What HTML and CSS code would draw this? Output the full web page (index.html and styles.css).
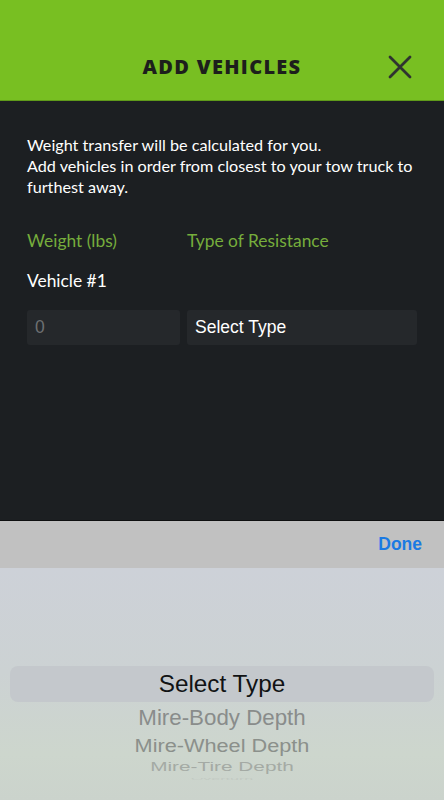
FILE: index.html
```html
<!DOCTYPE html>
<html lang="en">
<head>
<meta charset="utf-8">
<title>Add Vehicles</title>
<link rel="stylesheet" href="styles.css">
</head>
<body>
<div class="screen">
  <header class="header">
    <span class="spacer"></span>
    <h1 class="title">ADD VEHICLES</h1>
    <button class="close" aria-label="Close">
      <svg width="24" height="24" viewBox="0 0 24 24"><path d="M2 2 L22 22 M22 2 L2 22" stroke="#2f3330" stroke-width="2.8" stroke-linecap="round"/></svg>
    </button>
  </header>
  <main class="content">
    <p class="intro">Weight transfer will be calculated for you.<br>Add vehicles in order from closest to your tow truck to furthest away.</p>
    <div class="labels">
      <span class="label weight-col">Weight (lbs)</span>
      <span class="label">Type of Resistance</span>
    </div>
    <div class="vehicle">Vehicle #1</div>
    <div class="fields">
      <div class="field weight-field">0</div>
      <div class="field type-field">Select Type</div>
    </div>
  </main>
  <section class="picker">
    <div class="toolbar"><span class="done">Done</span></div>
    <div class="wheel">
      <div class="row selected">Select Type</div>
      <div class="row r1">Mire-Body Depth</div>
      <div class="row r2">Mire-Wheel Depth</div>
      <div class="row r3">Mire-Tire Depth</div>
      <div class="row r4">Overturn</div>
    </div>
  </section>
</div>
</body>
</html>
```

FILE: styles.css
```css
html, body {
  margin: 0;
  padding: 0;
}
body {
  width: 444px;
  height: 800px;
  overflow: hidden;
  font-family: "Lato", "Noto Sans", sans-serif;
  background: #1c1f22;
}
.screen {
  display: flex;
  flex-direction: column;
  height: 800px;
}
.header {
  height: 101px;
  flex: none;
  background: #78bf22;
  border-bottom: 1px solid #5f9a1a;
  display: grid;
  grid-template-columns: 60px 1fr 60px;
  align-items: end;
  padding-bottom: 19px;
  box-sizing: border-box;
}
.title {
  margin: 0;
  text-align: center;
  font-family: "Open Sans", "Liberation Sans", sans-serif;
  font-weight: 800;
  font-size: 20px;
  line-height: 28px;
  color: #1d1f1c;
  letter-spacing: 1.3px;
}
.close {
  background: none;
  border: 0;
  padding: 0;
  width: 24px;
  height: 28px;
  display: flex;
  align-items: center;
  justify-content: center;
  justify-self: start;
  margin-left: 4px;
}
.content {
  flex: 1;
  background: #1c1f22;
  padding: 33px 27px 0;
  box-sizing: border-box;
}
.intro {
  margin: 0;
  color: #ffffff;
  font-size: 16.2px;
  line-height: 21px;
}
.labels {
  display: flex;
  margin-top: 33px;
  font-size: 17.4px;
  line-height: 21px;
}
.label {
  color: #76ad3c;
}
.weight-col {
  width: 160px;
}
.vehicle {
  margin-top: 19px;
  color: #ffffff;
  font-size: 17.4px;
  line-height: 21px;
}
.fields {
  display: flex;
  gap: 7px;
  margin-top: 19px;
}
.field {
  height: 35px;
  background: #25282b;
  border-radius: 3px;
  display: flex;
  align-items: center;
  padding-left: 8px;
  box-sizing: border-box;
  font-family: "Liberation Sans", sans-serif;
  font-size: 17.5px;
}
.weight-field {
  width: 153px;
  color: #6d7072;
}
.type-field {
  flex: 1;
  color: #ffffff;
}
.picker {
  height: 280px;
  flex: none;
  display: flex;
  flex-direction: column;
  border-top: 1px solid #0e0f10;
  box-sizing: border-box;
}
.toolbar {
  height: 47px;
  flex: none;
  background: #c1c1c1;
  display: flex;
  align-items: center;
  justify-content: flex-end;
  padding-right: 22px;
}
.done {
  font-family: "Liberation Sans", sans-serif;
  font-weight: 700;
  font-size: 17.5px;
  color: #1b7ae3;
}
.wheel {
  flex: 1;
  background: linear-gradient(180deg, #cdd1d8 0%, #ccd2d3 45%, #cdd6cd 80%, #cbd3cc 100%);
  padding-top: 98px;
  display: flex;
  flex-direction: column;
  font-family: "Liberation Sans", sans-serif;
  text-align: center;
}
.row {
  display: flex;
  align-items: center;
  justify-content: center;
  white-space: nowrap;
}
.selected {
  height: 36px;
  margin: 0 10px;
  border-radius: 8px;
  background: #c4c8cc;
  font-size: 24.3px;
  color: #111314;
}
.r1 {
  height: 32px;
  font-size: 22.3px;
  color: #898c8b;
}
.r2 {
  height: 24px;
  font-size: 21.7px;
  color: #8b908b;
  transform: scaleY(0.82);
}
.r3 {
  height: 18px;
  font-size: 20.8px;
  color: #a4aaa4;
  transform: scaleY(0.6);
}
.r4 {
  height: 6px;
  font-size: 16px;
  color: #bfc6bf;
  transform: scaleY(0.25);
  overflow: hidden;
}
```
